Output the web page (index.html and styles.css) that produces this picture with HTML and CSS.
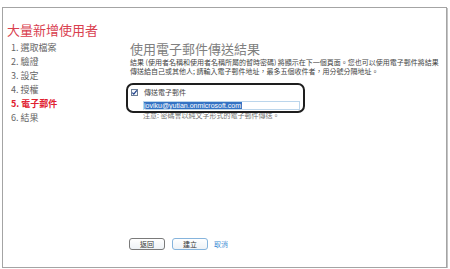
FILE: index.html
```html
<!DOCTYPE html>
<html lang="zh-Hant">
<head>
  <meta charset="UTF-8">
  <title>大量新增使用者</title>
  <link rel="stylesheet" href="styles.css">
</head>
<body>
<div class="frame">
  <div class="sidebar">
    <h1 class="wizard-title">大量新增使用者</h1>
    <ol class="steps">
      <li>1. 選取檔案</li>
      <li>2. 驗證</li>
      <li>3. 設定</li>
      <li>4. 授權</li>
      <li class="current">5. 電子郵件</li>
      <li>6. 結果</li>
    </ol>
  </div>

  <div class="main">
    <h2 class="page-title">使用電子郵件傳送結果</h2>
    <p class="intro">結果 (使用者名稱和使用者名稱所屬的暫時密碼) 將顯示在下一個頁面。您也可以使用電子郵件將結果<br>傳送給自己或其他人; 請輸入電子郵件地址，最多五個收件者，用分號分隔地址。</p>

    <div class="email-section">
      <!-- 標示框 -->
      <div class="callout"></div>
      <label class="check-row">
        <span class="checkbox">
          <svg width="7" height="7" viewBox="0 0 7 7"><path d="M1.3 3.6 L2.8 5.2 L5.8 1.4" fill="none" stroke="#1a3d8a" stroke-width="1.2"/></svg>
        </span>
        傳送電子郵件
      </label>
      <div class="email-input"><span class="selected">joviku@yutian.onmicrosoft.com</span></div>
      <p class="note">注意: 密碼會以純文字形式的電子郵件傳送。</p>
    </div>

    <div class="actions">
      <button class="button">返回</button>
      <button class="button primary">建立</button>
      <a class="cancel" href="#">取消</a>
    </div>
  </div>
</div>
</body>
</html>
```

FILE: styles.css
```css
body {
  margin: 0;
  background-color: #ffffff;
  font-family: "Noto Sans CJK TC", "Liberation Sans", sans-serif;
}
.frame {
  box-sizing: border-box;
  width: 445px;
  height: 261px;
  margin: 7px 0 0 2px;
  border: 1px solid #a4a4a4;
  box-shadow: 1px 1px 0 #c4c4c4;
  display: flex;
}
.sidebar {
  width: 124px;
  padding: 14px 0 0 4px;
  box-sizing: border-box;
}
.wizard-title {
  margin: 0;
  font-size: 13px;
  line-height: 16px;
  font-weight: normal;
  color: #d9404f;
}
.steps {
  list-style: none;
  margin: 3px 0 0 4px;
  padding: 0;
}
.steps li {
  font-size: 9px;
  line-height: 14px;
  color: #666666;
}
.steps li.current {
  color: #e0202f;
  font-weight: bold;
}
.main {
  flex: 1;
  display: flex;
  flex-direction: column;
  padding: 33px 0 17px 3px;
}
.page-title {
  margin: 0;
  font-size: 13px;
  line-height: 16px;
  font-weight: normal;
  color: #808080;
}
.intro {
  margin: 1px 0 0 0;
  font-size: 7px;
  line-height: 9px;
  color: #444444;
  white-space: nowrap;
}
.email-section {
  position: relative;
  margin-top: 11px;
}
.callout {
  position: absolute;
  left: -4px;
  top: -4px;
  width: 179px;
  height: 30px;
  box-sizing: border-box;
  border: 2px solid #1e1e1e;
  border-radius: 7px;
  pointer-events: none;
}
.check-row {
  display: flex;
  align-items: center;
  gap: 6px;
  font-size: 7px;
  line-height: 10px;
  color: #444444;
}
.checkbox {
  width: 7px;
  height: 7px;
  box-sizing: border-box;
  border: 1px solid #6d7f96;
  background-color: #f4f7fb;
  margin-left: 1px;
  display: flex;
}
.checkbox svg {
  margin: -1px;
}
.email-input {
  margin: 4px 0 0 13px;
  width: 157px;
  height: 9px;
  box-sizing: border-box;
  border: 1px solid #bcd6ec;
  font-family: "Liberation Sans", sans-serif;
  font-size: 7px;
  line-height: 7px;
  display: flex;
}
.email-input .selected {
  background-color: #3473c4;
  color: #ffffff;
  padding-right: 1px;
}
.note {
  margin: 1px 0 0 13px;
  font-size: 7px;
  line-height: 9px;
  color: #707070;
}
.actions {
  margin-top: auto;
  margin-left: -1px;
  display: flex;
  align-items: center;
  gap: 7px;
}
.button {
  width: 36px;
  height: 12px;
  padding: 0;
  border: 1px solid #7a7a7a;
  border-radius: 3px;
  background: linear-gradient(to bottom, #ffffff, #eef2f6);
  font-family: "Noto Sans CJK TC", sans-serif;
  font-size: 7px;
  line-height: 10px;
  color: #333333;
}
.button.primary {
  border-color: #86b4dc;
}
.cancel {
  margin-left: -1px;
  font-size: 7px;
  color: #3b8bd4;
  text-decoration: none;
}
```
